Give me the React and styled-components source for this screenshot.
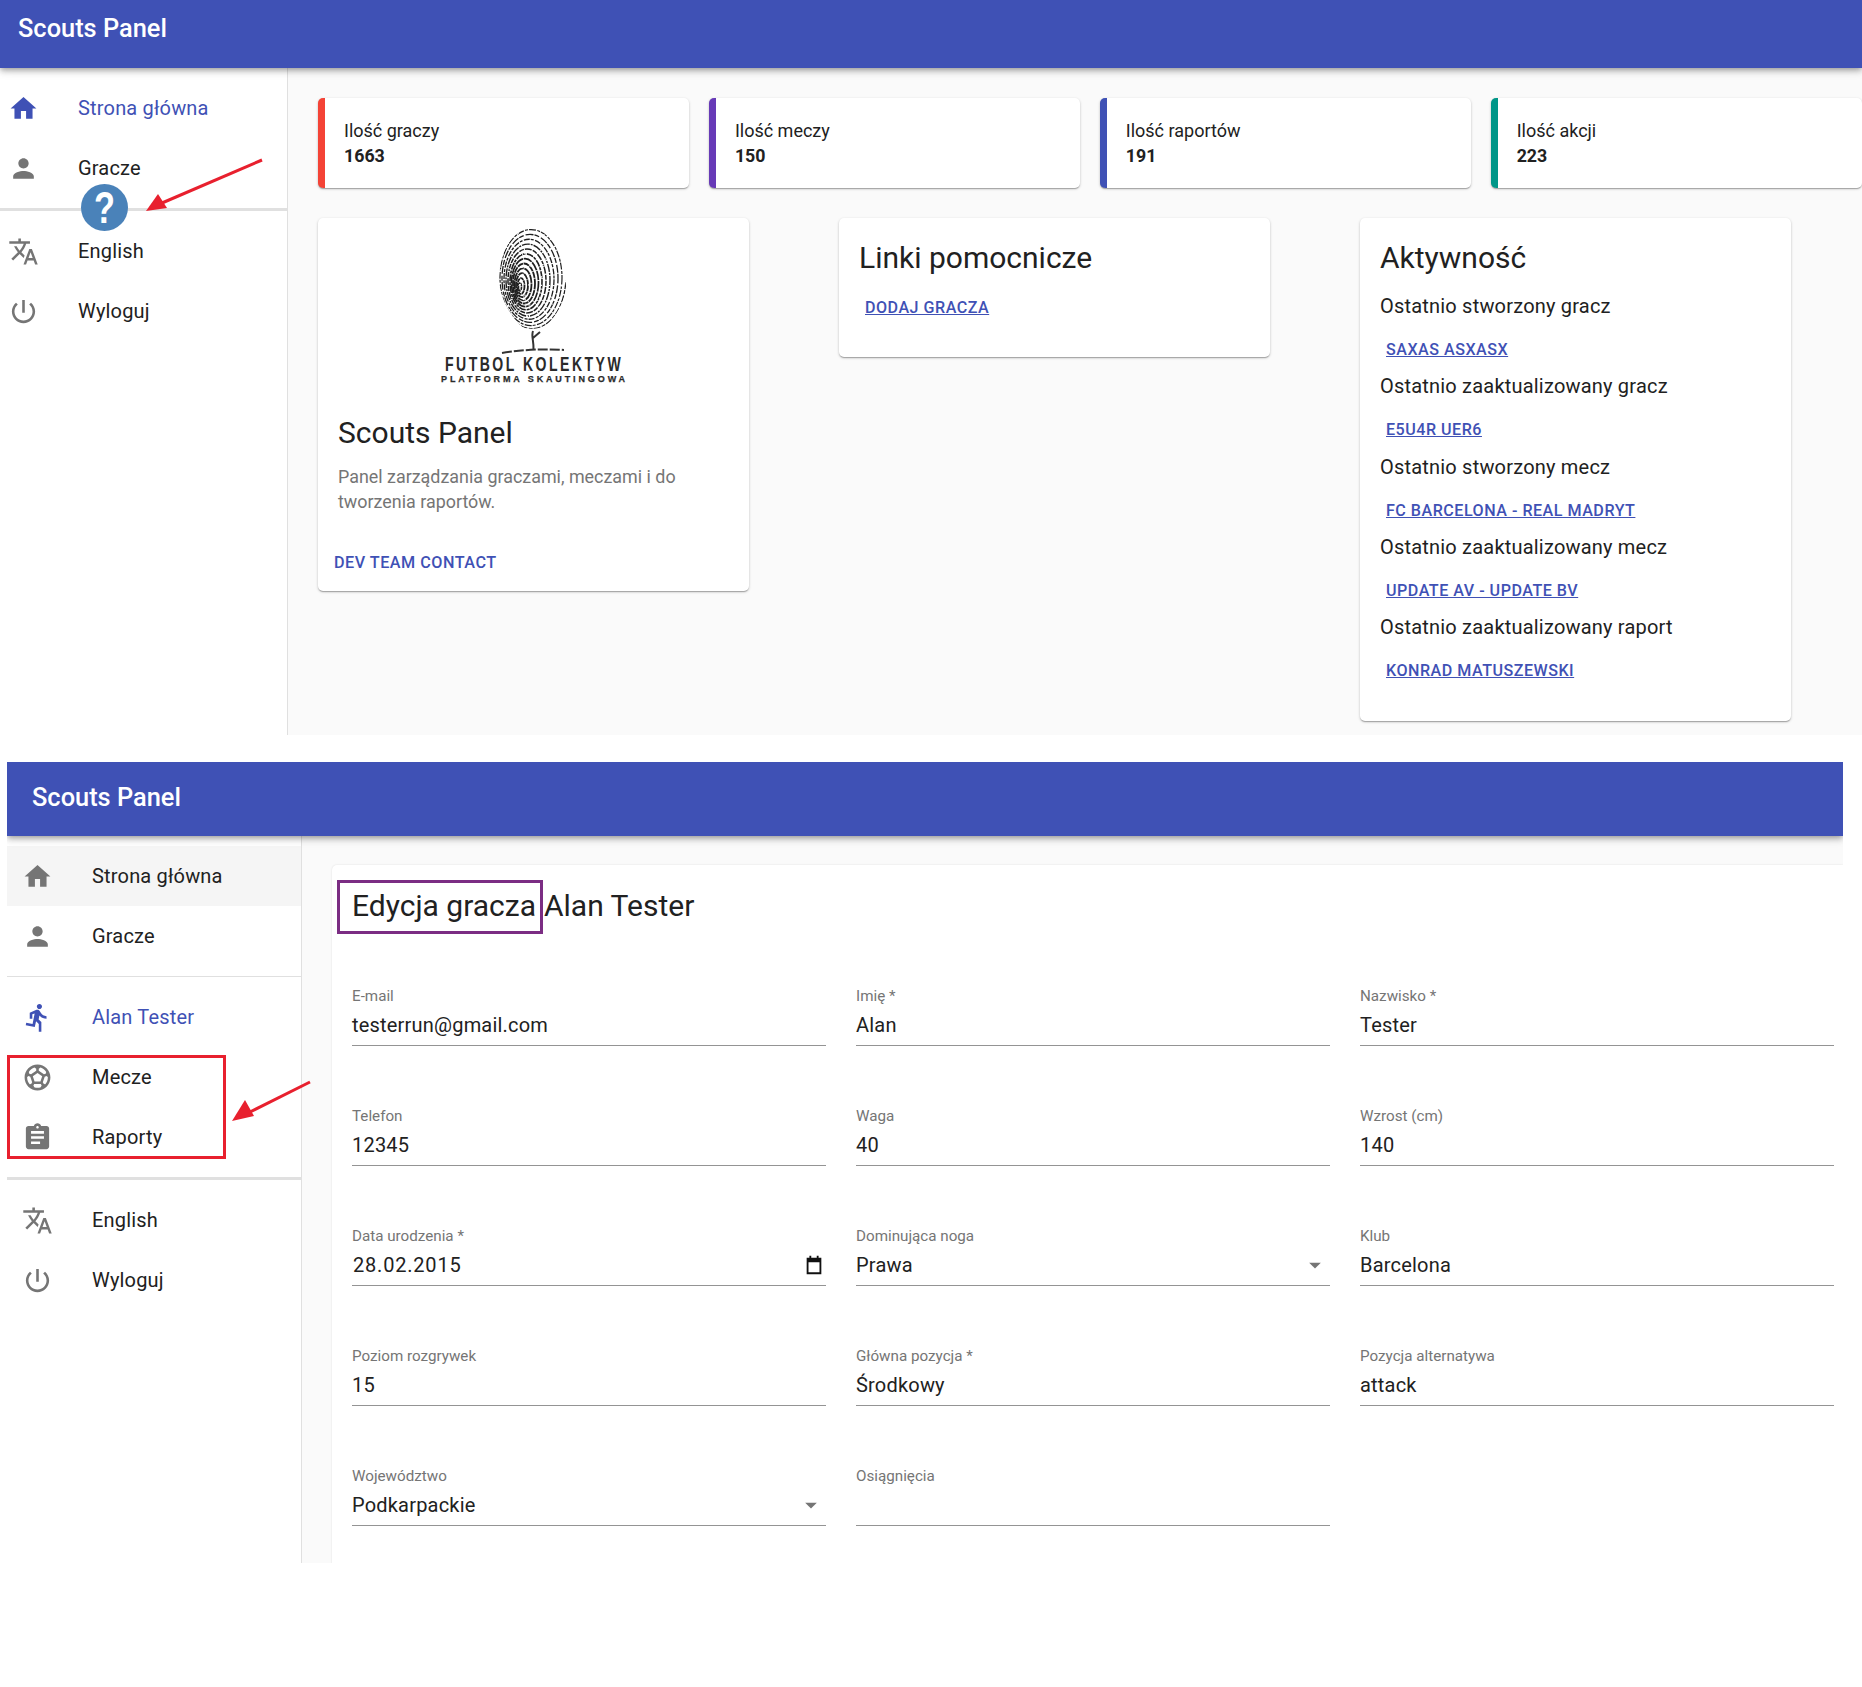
import React from "react";
import styled, { createGlobalStyle } from "styled-components";

const Global = createGlobalStyle`
  html, body { margin: 0; padding: 0; background: #fff; }
  body { font-family: Roboto, "Liberation Sans", sans-serif; color: #212121; }
  * { box-sizing: border-box; }
`;

const Page = styled.div`
  width: 1862px;
  height: 1687px;
  overflow: hidden;
  background: #fff;
`;
const Shot = styled.section`
  position: relative;
  display: flex;
  flex-direction: column;
  height: ${(p) => p.$height}px;
  width: ${(p) => p.$width}px;
  margin: ${(p) => p.$margin || "0"};
  overflow: hidden;
  background: #fafafa;
`;
const AppBar = styled.header`
  flex: none;
  position: relative;
  z-index: 2;
  height: ${(p) => p.$height}px;
  padding: ${(p) => p.$padding};
  background: #3f51b5;
  color: #fff;
  font-size: 25.4px;
  font-weight: 500;
  line-height: 28px;
  box-shadow: 0 2px 5px -1px rgba(0,0,0,.25), 0 4px 6px 0 rgba(0,0,0,.14), 0 1px 12px 0 rgba(0,0,0,.1);
`;
const Body = styled.div`
  flex: 1;
  display: flex;
  min-height: 0;
`;
const Sidebar = styled.nav`
  flex: none;
  width: ${(p) => p.$width}px;
  padding-top: 10px;
  background: #fff;
  border-right: 1px solid #e0e0e0;
`;
const NavItem = styled.div`
  display: flex;
  align-items: center;
  height: 60px;
  padding-left: ${(p) => p.$inset}px;
  background: ${(p) => (p.$hover ? "#f5f5f5" : "transparent")};
  color: ${(p) => (p.$active ? "#3f51b5" : "#212121")};
  font-size: 20px;
  letter-spacing: 0.18px;
`;
const NavIcon = styled.svg`
  flex: none;
  width: 31px;
  height: 31px;
  margin-right: 39.25px;
  fill: ${(p) => (p.$active ? "#3f51b5" : "#757575")};
`;
const Rule = styled.hr`
  margin: 10px 0;
  border: 0;
  height: ${(p) => p.$thick ? 3 : 1}px;
  background: #e0e0e0;
`;
const Dash = styled.main`
  flex: 1;
  padding: 30px 0 0 30px;
  background: #fafafa;
`;
const StatRow = styled.div`
  display: grid;
  grid-template-columns: repeat(4, 370.9px);
  gap: 20px;
`;
const StatCard = styled.div`
  height: 90px;
  padding: 20px 0 0 19px;
  border-left: 7px solid ${(p) => p.$color};
  border-radius: 5px;
  background: #fff;
  box-shadow: 0 1px 3px 0 rgba(0,0,0,.2), 0 1px 1px 0 rgba(0,0,0,.14), 0 2px 1px -1px rgba(0,0,0,.12);
`;
const StatLabel = styled.div`
  font-size: 18px;
  line-height: 25px;
`;
const StatValue = styled.div`
  font-size: 17.8px;
  font-weight: 700;
  line-height: 25px;
`;
const CardRow = styled.div`
  display: grid;
  grid-template-columns: repeat(3, 431px);
  gap: 90px;
  align-items: start;
  margin-top: 30px;
`;
const Card = styled.article`
  height: ${(p) => p.$height}px;
  padding: ${(p) => p.$padding || "0"};
  border-radius: 5px;
  background: #fff;
  box-shadow: 0 1px 3px 0 rgba(0,0,0,.2), 0 1px 1px 0 rgba(0,0,0,.14), 0 2px 1px -1px rgba(0,0,0,.12);
`;
const Logo = styled.svg`
  display: block;
  width: 431px;
  height: 176px;
`;
const CardBody = styled.div`
  padding: 20px 20px 0;
`;
const CardTitle = styled.h2`
  margin: 0;
  font-size: 30px;
  font-weight: 400;
  line-height: 38px;
  color: #212121;
`;
const CardText = styled.p`
  margin: 12px 0 0;
  font-size: 17.9px;
  line-height: 25px;
  color: #757575;
`;
const ActionLink = styled.div`
  margin: 37px 0 0 16px;
  font-size: 16.2px;
  font-weight: 500;
  line-height: 24px;
  letter-spacing: 0.5px;
  color: #3f51b5;
`;
const LinkLine = styled.a`
  display: block;
  margin: ${(p) => p.$margin || "0"};
  padding-left: 6px;
  font-size: 16.1px;
  font-weight: 500;
  line-height: 24px;
  letter-spacing: 0.5px;
  color: #3f51b5;
  text-decoration: underline;
`;
const ActivityLabel = styled.div`
  margin-top: ${(p) => p.$first ? 15 : 10.3}px;
  font-size: 20px;
  line-height: 28px;
  letter-spacing: 0.2px;
  color: #212121;
`;
const EditMain = styled.main`
  flex: 1;
  padding: 29px 0 0 30px;
  background: #fafafa;
  min-width: 0;
`;
const FormCard = styled.div`
  position: relative;
  height: 800px;
  padding: 20px 0 0 20px;
  border-radius: 5px 0 0 0;
  background: #fff;
  box-shadow: 0 0 2px rgba(0,0,0,.12);
`;
const Heading = styled.h1`
  margin: 0;
  font-size: 30px;
  font-weight: 400;
  line-height: 42px;
  color: #212121;
`;
const HeadingGap = styled.span`
  display: inline-block;
  width: 8px;
`;
const FormGrid = styled.div`
  display: grid;
  grid-template-columns: repeat(3, 474px);
  column-gap: 30px;
  grid-auto-rows: 120px;
  margin-top: 58px;
`;
const Field = styled.div`
  height: 80px;
`;
const FieldLabel = styled.div`
  height: 22px;
  font-size: 15.2px;
  line-height: 22px;
  color: #757575;
`;
const FieldValue = styled.div`
  display: flex;
  align-items: center;
  justify-content: space-between;
  height: 39px;
  padding-bottom: 2px;
  border-bottom: 1.4px solid #949494;
  font-size: 20px;
  letter-spacing: ${(p) => p.$spaced ? "0.8px" : "0.2px"};
  padding-left: ${(p) => p.$spaced ? "1px" : "0"};
  color: #212121;
`;
const FieldIcon = styled.svg`
  flex: none;
  width: ${(p) => p.$size}px;
  height: ${(p) => p.$size}px;
  margin-right: ${(p) => p.$right}px;
`;
const Badge = styled.div`
  position: absolute;
  left: 81px;
  top: 184px;
  width: 47px;
  height: 47px;
  border-radius: 50%;
  background: #4a82b9;
  color: #fff;
  display: flex;
  align-items: center;
  justify-content: center;
  font-family: "Liberation Sans", sans-serif;
  font-size: 44px;
  font-weight: 700;
  z-index: 3;
`;
const BadgeGlyph = styled.span`
  display: block;
  transform: scaleX(0.78);
`;
const Arrow = styled.svg`
  position: absolute;
  left: 0;
  top: 0;
  width: 100%;
  height: 100%;
  pointer-events: none;
  z-index: 3;
`;
const Marker = styled.div`
  position: absolute;
  left: ${(p) => p.$left}px;
  top: ${(p) => p.$top}px;
  width: ${(p) => p.$width}px;
  height: ${(p) => p.$height}px;
  border: 3px solid ${(p) => p.$color};
  pointer-events: none;
  z-index: 3;
`;

const P = {
  home: "M10 20v-6h4v6h5v-8h3L12 3 2 12h3v8z",
  person: "M12 12c2.21 0 4-1.79 4-4s-1.79-4-4-4-4 1.79-4 4 1.79 4 4 4zm0 2c-2.67 0-8 1.34-8 4v2h16v-2c0-2.66-5.33-4-8-4z",
  translate: "M12.87 15.07l-2.54-2.51.03-.03c1.74-1.94 2.98-4.17 3.71-6.53H17V4h-7V2H8v2H1v1.99h11.17C11.5 7.92 10.44 9.75 9 11.35 8.07 10.32 7.3 9.19 6.69 8h-2c.73 1.63 1.73 3.17 2.98 4.56l-5.09 5.02L4 19l5-5 3.11 3.11.76-2.04zM18.5 10h-2L12 22h2l1.12-3h4.75L21 22h2l-4.5-12zm-2.62 7l1.62-4.33L19.12 17h-3.24z",
  power: "M13 3h-2v10h2V3zm4.83 2.17l-1.42 1.42C17.99 7.86 19 9.81 19 12c0 3.87-3.13 7-7 7s-7-3.13-7-7c0-2.19 1.01-4.14 2.58-5.42L6.17 5.17C4.23 6.82 3 9.26 3 12c0 4.97 4.03 9 9 9s9-4.03 9-9c0-2.74-1.23-5.18-3.17-6.83z",
  run: "M13.49 5.48c1.1 0 2-.9 2-2s-.9-2-2-2-2 .9-2 2 .9 2 2 2zm-3.6 13.9l1-4.4 2.1 2v6h2v-7.5l-2.1-2 .6-3c1.3 1.5 3.3 2.5 5.5 2.5v-2c-1.9 0-3.5-1-4.3-2.4l-1-1.6c-.4-.6-1-1-1.7-1-.3 0-.5.1-.8.1l-5.2 2.2v4.7h2v-3.4l1.8-.7-1.6 8.1-4.9-1-.4 2 7 1.4z",
  soccer: "M12 2C6.48 2 2 6.48 2 12s4.48 10 10 10 10-4.48 10-10S17.52 2 12 2zm1 3.3l1.35-.95c1.82.56 3.37 1.76 4.38 3.34l-.39 1.34-1.35.46L13 6.7V5.3zm-3.35-.95L11 5.3v1.4L7.01 9.49l-1.35-.46-.39-1.34c1.01-1.57 2.56-2.77 4.38-3.34zM7.08 17.11l-1.14.1C4.73 15.81 4 13.99 4 12c0-.12.01-.23.02-.35l1-.73 1.38.48 1.46 4.34-.78 1.37zm7.42 2.48c-.79.26-1.63.41-2.5.41s-1.71-.15-2.5-.41l-.69-1.49.64-1.1h5.11l.64 1.11-.7 1.48zM14.27 15H9.73l-1.35-4.02L12 8.44l3.63 2.54L14.27 15zm3.79 2.21l-1.14-.1-.79-1.37 1.46-4.34 1.39-.47 1 .73c.01.11.02.22.02.34 0 1.99-.73 3.81-1.94 5.21z",
  report: "M19 3h-4.18C14.4 1.84 13.3 1 12 1c-1.3 0-2.4.84-2.82 2H5c-1.1 0-2 .9-2 2v14c0 1.1.9 2 2 2h14c1.1 0 2-.9 2-2V5c0-1.1-.9-2-2-2zm-7 0c.55 0 1 .45 1 1s-.45 1-1 1-1-.45-1-1 .45-1 1-1zm2 14H7v-2h7v2zm3-4H7v-2h10v2zm0-4H7V7h10v2z",
};

const Item = ({ icon, label, inset, active, hover }) => (
  <NavItem $inset={inset} $active={active} $hover={hover}>
    <NavIcon viewBox="0 0 24 24" $active={active}><path d={P[icon]} /></NavIcon>
    {label}
  </NavItem>
);

const ridges = [
  [40, 60, "6 2 3 1.5 9 2", 1.3], [37, 56, "9 1.5 4 2", 1.2], [34, 52, "4 1.5 7 1", 1.3],
  [31, 48, "7 1.4 3 1", 1.2], [28, 44, "5 2 8 1", 1.3], [25, 40, "6 1 3 1.5", 1.3],
  [22, 36, "8 1 2 1", 1.4], [19, 32, "5 1 7 1.2", 1.5], [16, 28, "7 .8 3 1", 1.6],
  [13.5, 24, "9 .8", 1.7], [11, 20, "6 .7", 1.8], [8.5, 16, "8 .6", 1.8],
  [6, 12, "6 .5", 1.8], [3.5, 8, "4 .5", 1.8], [1.5, 4, "3 .5", 1.6],
];
const specks = [
  "M186 30l60 16", "M182 52l64 -8", "M184 78l62 10", "M190 92l52 -12", "M200 14l10 90", "M226 16l-6 92", "M180 66l66 2",
];

const LogoMark = () => (
  <Logo viewBox="0 0 431 176">
    <defs>
      <clipPath id="print">
        <path d="M214 9c17 0 30 22 31 45 1 6 3 9 3 14 0 14-12 34-20 39-6 4-20 6-26 0-10-10-20-28-21-44-1-26 14-54 33-54z" />
      </clipPath>
    </defs>
    <g clipPath="url(#print)">
      <g fill="none" stroke="#1f1f1f">
        {ridges.map(([rx, ry, dash, w], i) => (
          <ellipse
            key={i}
            cx={216 - i * 1}
            cy={57 + i * 0.85}
            rx={rx}
            ry={ry}
            strokeDasharray={dash}
            strokeWidth={w}
          />
        ))}
      </g>
      <g fill="none" stroke="#fff" strokeWidth="1.1" strokeDasharray="2 7 1 11">
        {specks.map((d) => <path key={d} d={d} />)}
      </g>
    </g>
    <path d="M215 113c-2 5 1 10 .5 19M215 120l7-6" fill="none" stroke="#333" strokeWidth="2" />
    <path d="M184 135q30-5 62-3" fill="none" stroke="#333" strokeWidth="2" strokeDasharray="10 2" />
    <text transform="translate(127 153) scale(.72 1)" textLength="244" lengthAdjust="spacing" fontFamily="'Liberation Sans', sans-serif" fontWeight="700" fontSize="19.5" fill="#2a2a2a">FUTBOL KOLEKTYW</text>
    <text x="123" y="164" textLength="184" lengthAdjust="spacing" fontFamily="'Liberation Sans', sans-serif" fontWeight="700" fontSize="9" fill="#2a2a2a" stroke="#2a2a2a" strokeWidth=".25">PLATFORMA SKAUTINGOWA</text>
  </Logo>
);

const stats = [
  ["Ilość graczy", "1663", "#f44336"],
  ["Ilość meczy", "150", "#673ab7"],
  ["Ilość raportów", "191", "#3f51b5"],
  ["Ilość akcji", "223", "#009688"],
];
const activity = [
  ["Ostatnio stworzony gracz", "SAXAS ASXASX"],
  ["Ostatnio zaaktualizowany gracz", "E5U4R UER6"],
  ["Ostatnio stworzony mecz", "FC BARCELONA - REAL MADRYT"],
  ["Ostatnio zaaktualizowany mecz", "UPDATE AV - UPDATE BV"],
  ["Ostatnio zaaktualizowany raport", "KONRAD MATUSZEWSKI"],
];
const fields = [
  ["E-mail", "testerrun@gmail.com"],
  ["Imię *", "Alan"],
  ["Nazwisko *", "Tester"],
  ["Telefon", "12345"],
  ["Waga", "40"],
  ["Wzrost (cm)", "140"],
  ["Data urodzenia *", "28.02.2015", "date"],
  ["Dominująca noga", "Prawa", "select"],
  ["Klub", "Barcelona"],
  ["Poziom rozgrywek", "15"],
  ["Główna pozycja *", "Środkowy"],
  ["Pozycja alternatywa", "attack"],
  ["Województwo", "Podkarpackie", "select"],
  ["Osiągnięcia", ""],
];

const RedArrow = ({ x1, y1, x2, y2, head }) => (
  <Arrow>
    <line x1={x1} y1={y1} x2={x2} y2={y2} stroke="#e8202e" strokeWidth="3" />
    <polygon points={head} fill="#e8202e" />
  </Arrow>
);

export default function App() {
  return (
    <Page>
      <Global />
      <Shot $height={735} $width={1862}>
        <AppBar $height={68} $padding="14px 18px">Scouts Panel</AppBar>
        <Body>
          <Sidebar $width={288}>
            <Item icon="home" label="Strona główna" inset={7.75} active />
            <Item icon="person" label="Gracze" inset={7.75} />
            <Rule $thick />
            <Item icon="translate" label="English" inset={7.75} />
            <Item icon="power" label="Wyloguj" inset={7.75} />
          </Sidebar>
          <Dash>
            <StatRow>
              {stats.map(([label, value, color]) => (
                <StatCard key={label} $color={color}>
                  <StatLabel>{label}</StatLabel>
                  <StatValue>{value}</StatValue>
                </StatCard>
              ))}
            </StatRow>
            <CardRow>
              <Card $height={373}>
                <LogoMark />
                <CardBody>
                  <CardTitle>Scouts Panel</CardTitle>
                  <CardText>Panel zarządzania graczami, meczami i do tworzenia raportów.</CardText>
                </CardBody>
                <ActionLink>DEV TEAM CONTACT</ActionLink>
              </Card>
              <Card $height={139} $padding="21px 20px">
                <CardTitle>Linki pomocnicze</CardTitle>
                <LinkLine $margin="19px 0 0">DODAJ GRACZA</LinkLine>
              </Card>
              <Card $height={503} $padding="21px 20px">
                <CardTitle>Aktywność</CardTitle>
                {activity.map(([label, link], i) => (
                  <React.Fragment key={label}>
                    <ActivityLabel $first={i === 0}>{label}</ActivityLabel>
                    <LinkLine $margin="18px 0 0">{link}</LinkLine>
                  </React.Fragment>
                ))}
              </Card>
            </CardRow>
          </Dash>
        </Body>
        <Badge><BadgeGlyph>?</BadgeGlyph></Badge>
        <RedArrow x1={262} y1={160} x2={162} y2={203} head="146,211 158,194 167,208" />
      </Shot>

      <Shot $height={801} $width={1836} $margin="27px 0 0 7px">
        <AppBar $height={74} $padding="21px 25px">Scouts Panel</AppBar>
        <Body>
          <Sidebar $width={295}>
            <Item icon="home" label="Strona główna" inset={14.75} hover />
            <Item icon="person" label="Gracze" inset={14.75} />
            <Rule />
            <Item icon="run" label="Alan Tester" inset={14.75} active />
            <Item icon="soccer" label="Mecze" inset={14.75} />
            <Item icon="report" label="Raporty" inset={14.75} />
            <Rule $thick />
            <Item icon="translate" label="English" inset={14.75} />
            <Item icon="power" label="Wyloguj" inset={14.75} />
          </Sidebar>
          <EditMain>
            <FormCard>
              <Heading>Edycja gracza<HeadingGap />Alan Tester</Heading>
              <FormGrid>
                {fields.map(([label, value, kind]) => (
                  <Field key={label}>
                    <FieldLabel>{label}</FieldLabel>
                    <FieldValue $spaced={kind === "date"}>
                      {value}
                      {kind === "date" && (
                        <FieldIcon viewBox="0 0 24 24" $size={22} $right={1}>
                          <path d="M7 2h2v2h6V2h2v2h3v18H4V4h3V2zm-1 7v11h12V9H6z" fill="#111" />
                        </FieldIcon>
                      )}
                      {kind === "select" && (
                        <FieldIcon viewBox="0 0 24 24" $size={28} $right={1}>
                          <path d="M7 10l5 5 5-5z" fill="#757575" />
                        </FieldIcon>
                      )}
                    </FieldValue>
                  </Field>
                ))}
              </FormGrid>
            </FormCard>
          </EditMain>
        </Body>
        <Marker $left={330} $top={118} $width={206} $height={54} $color="#7b2d83" />
        <Marker $left={0} $top={293} $width={219} $height={104} $color="#e8202e" />
        <RedArrow x1={303} y1={320} x2={241} y2={351} head="225,359 238,338 247,354" />
      </Shot>
    </Page>
  );
}
